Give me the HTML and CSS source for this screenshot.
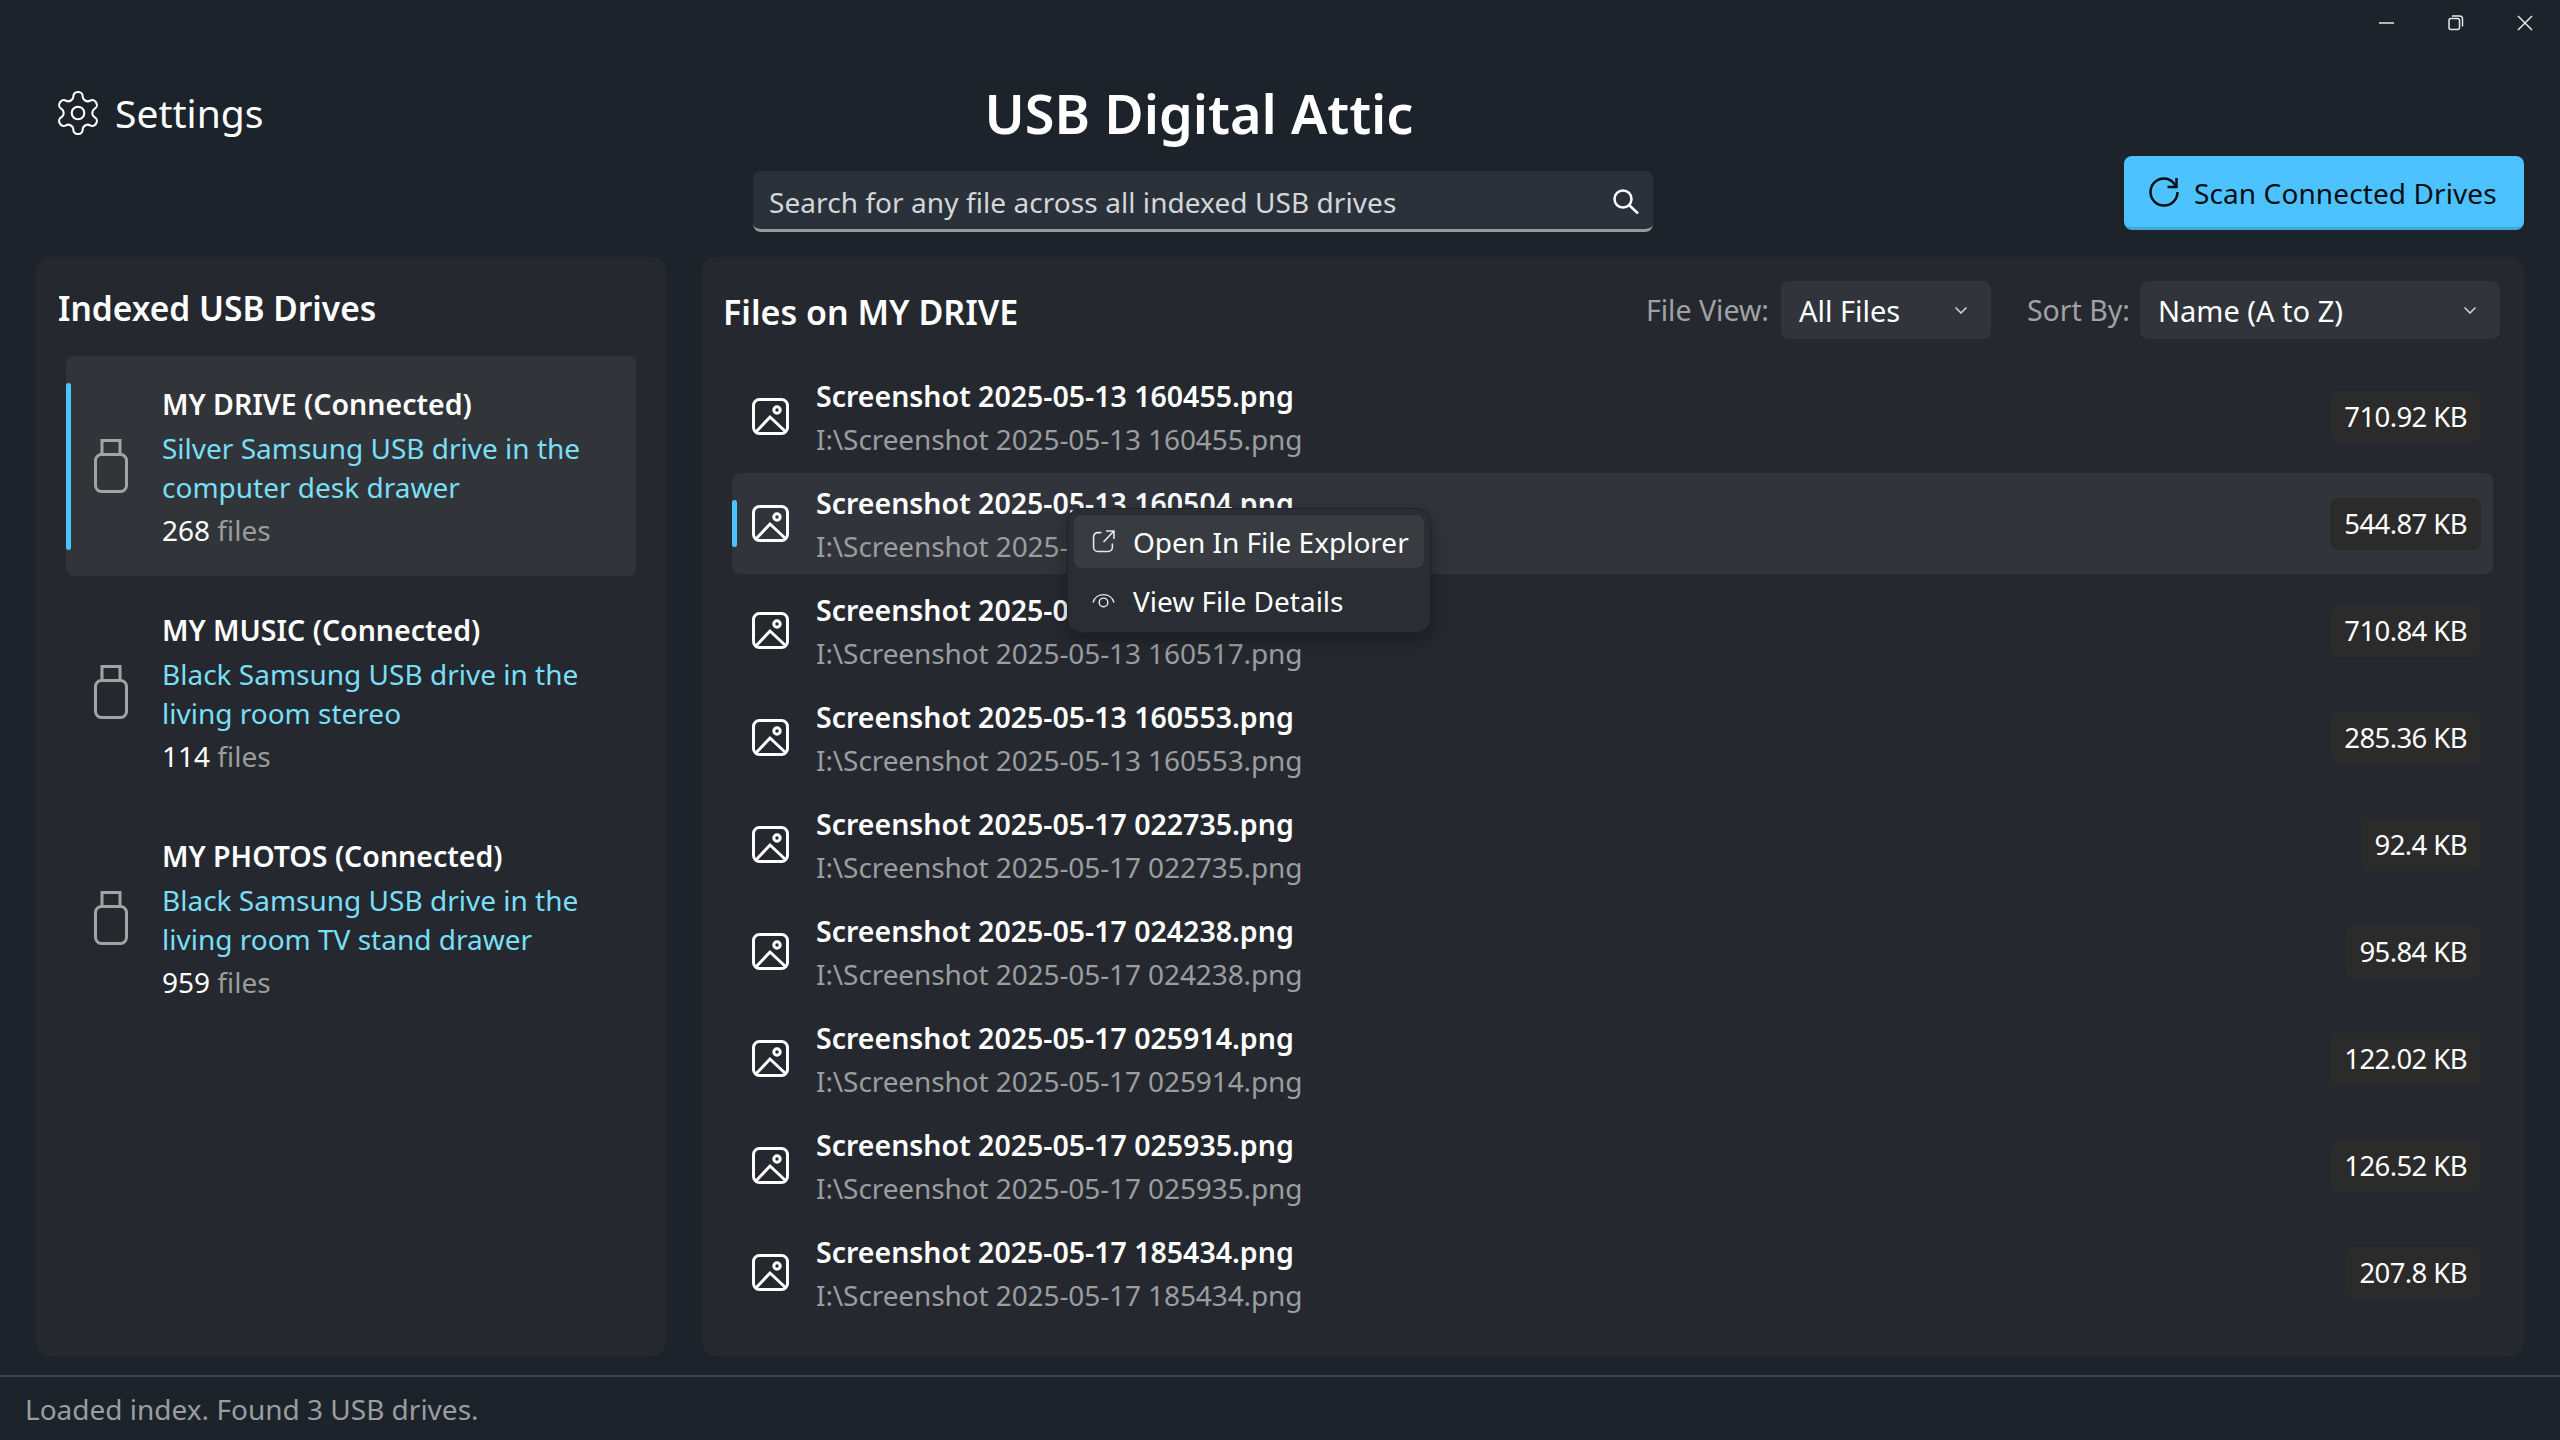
FILE: index.html
```html
<!DOCTYPE html>
<html lang="en">
<head>
  <meta charset="UTF-8" />
  <meta name="viewport" content="width=device-width, initial-scale=1.0" />
  <title>USB Digital Attic</title>
  <link rel="stylesheet" href="styles.css">
</head>
<body>
  <div class="app">
    <div class="titlebar">
      <svg class="win-icon" viewBox="0 0 16 16"><path d="M0 8h15"/></svg>
      <svg class="win-icon" viewBox="0 0 16 16"><rect x="1" y="3.500" width="10.500" height="11" rx="2"/><path d="M4 1h7.500A3 3 0 0 1 14.500 4v7.500"/></svg>
      <svg class="win-icon" viewBox="0 0 16 16"><path d="M1 1l14 14M15 1L1 15"/></svg>
    </div>

    <header class="header">
      <div class="settings">
        <svg class="gear" viewBox="2.500 1.500 19 21"><path d="M12.220 2h-.44a2 2 0 0 0-2 2v.18a2 2 0 0 1-1 1.730l-.43.25a2 2 0 0 1-2 0l-.15-.08a2 2 0 0 0-2.730.73l-.22.38a2 2 0 0 0 .73 2.730l.15.1a2 2 0 0 1 1 1.720v.51a2 2 0 0 1-1 1.740l-.15.09a2 2 0 0 0-.73 2.730l.22.38a2 2 0 0 0 2.730.73l.15-.08a2 2 0 0 1 2 0l.43.25a2 2 0 0 1 1 1.730V20a2 2 0 0 0 2 2h.44a2 2 0 0 0 2-2v-.18a2 2 0 0 1 1-1.730l.43-.25a2 2 0 0 1 2 0l.15.08a2 2 0 0 0 2.730-.73l.22-.39a2 2 0 0 0-.73-2.730l-.15-.08a2 2 0 0 1-1-1.740v-.5a2 2 0 0 1 1-1.740l.15-.09a2 2 0 0 0 .73-2.730l-.22-.38a2 2 0 0 0-2.730-.73l-.15.08a2 2 0 0 1-2 0l-.43-.25a2 2 0 0 1-1-1.730V4a2 2 0 0 0-2-2z"/><circle cx="12" cy="12" r="3"/></svg>
        <span>Settings</span>
      </div>
      <div class="center">
        <h1>USB Digital Attic</h1>
        <div class="search">
          <span>Search for any file across all indexed USB drives</span>
          <svg class="search-icon" viewBox="0 0 26 25"><circle cx="10" cy="10" r="8.500"/><path d="M16 16l9 8.500"/></svg>
        </div>
      </div>
      <div class="scan">
        <svg class="scan-icon" viewBox="0 0 30 30"><path d="M15 1.500A13.500 13.500 0 1 0 28.500 15M27.500 1v9h-9"/><path d="M15 1.500c5 0 9.500 3 12.500 8.500"/></svg>
        <span>Scan Connected Drives</span>
      </div>
    </header>

    <main class="main">
      <section class="panel drives">
        <h2>Indexed USB Drives</h2>
        <div class="drive selected">
          <svg class="usb" viewBox="0 0 34 54"><rect x="1.500" y="15.500" width="31" height="37" rx="6"/><path d="M8 15V1.500h18V15"/></svg>
          <div class="drive-text">
            <div class="drive-name">MY DRIVE (Connected)</div>
            <div class="drive-desc">Silver Samsung USB drive in the computer desk drawer</div>
            <div class="drive-count"><b>268</b> files</div>
          </div>
        </div>
        <div class="drive">
          <svg class="usb" viewBox="0 0 34 54"><rect x="1.500" y="15.500" width="31" height="37" rx="6"/><path d="M8 15V1.500h18V15"/></svg>
          <div class="drive-text">
            <div class="drive-name">MY MUSIC (Connected)</div>
            <div class="drive-desc">Black Samsung USB drive in the living room stereo</div>
            <div class="drive-count"><b>114</b> files</div>
          </div>
        </div>
        <div class="drive">
          <svg class="usb" viewBox="0 0 34 54"><rect x="1.500" y="15.500" width="31" height="37" rx="6"/><path d="M8 15V1.500h18V15"/></svg>
          <div class="drive-text">
            <div class="drive-name">MY PHOTOS (Connected)</div>
            <div class="drive-desc">Black Samsung USB drive in the living room TV stand drawer</div>
            <div class="drive-count"><b>959</b> files</div>
          </div>
        </div>
      </section>

      <section class="panel files">
        <div class="files-head">
          <h2>Files on MY DRIVE</h2>
          <div class="filters">
            <label>File View:</label>
            <div class="select view-select"><span>All Files</span><svg class="chev" viewBox="0 0 12 7"><path d="M.5 .5L6 6l5.500-5.500"/></svg></div>
            <label class="sort-label">Sort By:</label>
            <div class="select sort-select"><span>Name (A to Z)</span><svg class="chev" viewBox="0 0 12 7"><path d="M.5 .5L6 6l5.500-5.500"/></svg></div>
          </div>
        </div>

        <div class="file-list">
          <div class="file">
            <svg class="img" viewBox="0 0 37 37"><rect x="1.500" y="1.500" width="34" height="34" rx="6"/><circle cx="25" cy="12" r="3.200"/><path d="M3 35L18 19l16 15"/></svg>
            <div class="file-text"><div class="file-name">Screenshot 2025-05-13 160455.png</div><div class="file-path">I:\Screenshot 2025-05-13 160455.png</div></div>
            <div class="size">710.92 KB</div>
          </div>
          <div class="file selected">
            <svg class="img" viewBox="0 0 37 37"><rect x="1.500" y="1.500" width="34" height="34" rx="6"/><circle cx="25" cy="12" r="3.200"/><path d="M3 35L18 19l16 15"/></svg>
            <div class="file-text"><div class="file-name">Screenshot 2025-05-13 160504.png</div><div class="file-path">I:\Screenshot 2025-05-13 160504.png</div></div>
            <div class="size">544.87 KB</div>
            <div class="menu">
              <div class="menu-item hover">
                <svg class="menu-icon" viewBox="0 0 22 22"><path d="M9 2.500H5.500a4 4 0 0 0-4 4v10a4 4 0 0 0 4 4h10a4 4 0 0 0 4-4V13M11 11.500L20.500 1.500M13.500 1h7.500v7.500"/></svg>
                <span>Open In File Explorer</span>
              </div>
              <div class="menu-item">
                <svg class="menu-icon" viewBox="0 0 24 16"><path d="M1 10a11.500 11.500 0 0 1 22 0"/><circle cx="12" cy="10" r="4.500"/></svg>
                <span>View File Details</span>
              </div>
            </div>
          </div>
          <div class="file">
            <svg class="img" viewBox="0 0 37 37"><rect x="1.500" y="1.500" width="34" height="34" rx="6"/><circle cx="25" cy="12" r="3.200"/><path d="M3 35L18 19l16 15"/></svg>
            <div class="file-text"><div class="file-name">Screenshot 2025-05-13 160517.png</div><div class="file-path">I:\Screenshot 2025-05-13 160517.png</div></div>
            <div class="size">710.84 KB</div>
          </div>
          <div class="file">
            <svg class="img" viewBox="0 0 37 37"><rect x="1.500" y="1.500" width="34" height="34" rx="6"/><circle cx="25" cy="12" r="3.200"/><path d="M3 35L18 19l16 15"/></svg>
            <div class="file-text"><div class="file-name">Screenshot 2025-05-13 160553.png</div><div class="file-path">I:\Screenshot 2025-05-13 160553.png</div></div>
            <div class="size">285.36 KB</div>
          </div>
          <div class="file">
            <svg class="img" viewBox="0 0 37 37"><rect x="1.500" y="1.500" width="34" height="34" rx="6"/><circle cx="25" cy="12" r="3.200"/><path d="M3 35L18 19l16 15"/></svg>
            <div class="file-text"><div class="file-name">Screenshot 2025-05-17 022735.png</div><div class="file-path">I:\Screenshot 2025-05-17 022735.png</div></div>
            <div class="size">92.4 KB</div>
          </div>
          <div class="file">
            <svg class="img" viewBox="0 0 37 37"><rect x="1.500" y="1.500" width="34" height="34" rx="6"/><circle cx="25" cy="12" r="3.200"/><path d="M3 35L18 19l16 15"/></svg>
            <div class="file-text"><div class="file-name">Screenshot 2025-05-17 024238.png</div><div class="file-path">I:\Screenshot 2025-05-17 024238.png</div></div>
            <div class="size">95.84 KB</div>
          </div>
          <div class="file">
            <svg class="img" viewBox="0 0 37 37"><rect x="1.500" y="1.500" width="34" height="34" rx="6"/><circle cx="25" cy="12" r="3.200"/><path d="M3 35L18 19l16 15"/></svg>
            <div class="file-text"><div class="file-name">Screenshot 2025-05-17 025914.png</div><div class="file-path">I:\Screenshot 2025-05-17 025914.png</div></div>
            <div class="size">122.02 KB</div>
          </div>
          <div class="file">
            <svg class="img" viewBox="0 0 37 37"><rect x="1.500" y="1.500" width="34" height="34" rx="6"/><circle cx="25" cy="12" r="3.200"/><path d="M3 35L18 19l16 15"/></svg>
            <div class="file-text"><div class="file-name">Screenshot 2025-05-17 025935.png</div><div class="file-path">I:\Screenshot 2025-05-17 025935.png</div></div>
            <div class="size">126.52 KB</div>
          </div>
          <div class="file">
            <svg class="img" viewBox="0 0 37 37"><rect x="1.500" y="1.500" width="34" height="34" rx="6"/><circle cx="25" cy="12" r="3.200"/><path d="M3 35L18 19l16 15"/></svg>
            <div class="file-text"><div class="file-name">Screenshot 2025-05-17 185434.png</div><div class="file-path">I:\Screenshot 2025-05-17 185434.png</div></div>
            <div class="size">207.8 KB</div>
          </div>
        </div>
      </section>
    </main>

    <footer class="status">Loaded index. Found 3 USB drives.</footer>
  </div>
</body>
</html>
```
FILE: styles.css
```css
* { box-sizing: border-box; }
html, body { margin: 0; height: 100%; }
body {
  font-family: "Noto Sans", "Open Sans", sans-serif;
  background-color: #1c232b;
  color: #fff;
  font-size: 28px;
}
svg { fill: none; stroke: currentColor; display: block; }
h1, h2 { margin: 0; }

.app {
  width: 2560px;
  height: 1440px;
  display: flex;
  flex-direction: column;
  overflow: hidden;
}

/* title bar */
.titlebar {
  height: 46px;
  flex: none;
  display: flex;
  justify-content: flex-end;
  align-items: center;
  gap: 53px;
  padding-right: 27px;
}
.win-icon { width: 16px; height: 16px; stroke-width: 1.5; color: #e6e8ea; }

/* header */
.header {
  height: 211px;
  flex: none;
  display: grid;
  grid-template-columns: 753px 900px 1fr;
}
.settings {
  display: flex;
  align-items: center;
  gap: 16px;
  padding: 43px 0 0 57px;
  height: 90px;
  font-size: 39px;
}
.gear { width: 42px; height: 44px; stroke-width: 1; margin-top: 1px; }
.center { display: flex; flex-direction: column; align-items: center; }
h1 { font-size: 54px; font-weight: 600; line-height: 68px; margin-top: 33px; margin-left: -8px; }
.search {
  width: 900px;
  height: 61px;
  margin-top: 24px;
  padding: 4px 14px 0 16px;
  background: #2b313a;
  border-bottom: 3px solid #9a9a9a;
  border-radius: 8px;
  display: flex;
  align-items: center;
  justify-content: space-between;
  color: #d4d6d8;
  letter-spacing: 0.07px;
}
.search-icon { width: 26px; height: 25px; stroke-width: 2.500; color: #fff; margin-top: -2px; }
.scan {
  justify-self: end;
  margin: 110px 36px 0 0;
  width: 400px;
  height: 74px;
  background: #4cc2ff;
  border-bottom: 3px solid #42a9de;
  border-radius: 8px;
  color: #0a0e12;
  display: flex;
  align-items: center;
  gap: 15px;
  padding: 2px 0 0 25px;
  white-space: nowrap;
}
.scan-icon { width: 30px; height: 30px; stroke-width: 2.500; margin-top: -2px; }
.scan span { letter-spacing: 0.1px; }

/* panels */
.main {
  height: 1099px;
  flex: none;
  display: grid;
  grid-template-columns: 630px 1fr;
  gap: 36px;
  padding: 0 36px;
}
.panel { background: #25292f; border-radius: 14px; }
.panel h2 { font-size: 34px; font-weight: 600; }

.drives { padding: 28px 30px 0; }
.drives h2 { font-size: 33.500px; margin-left: -8px; line-height: 46px; margin-bottom: 25px; }
.drive {
  height: 220px;
  margin-bottom: 6px;
  border-radius: 8px;
  display: flex;
  align-items: center;
  gap: 34px;
  padding-left: 28px;
  position: relative;
}
.drive.selected { background: #31353a; }
.drive.selected::before {
  content: "";
  position: absolute;
  left: 0;
  top: 27px;
  bottom: 26px;
  width: 5px;
  border-radius: 3px;
  background: #4cc2ff;
}
.usb { width: 34px; height: 54px; stroke-width: 3; color: #a3a3a3; flex: none; }
.drive-text { width: 450px; padding-top: 3px; }
.drive-name { font-size: 28.500px; font-weight: 600; line-height: 39px; margin-bottom: 5px; }
.drive-desc { color: #79dff7; line-height: 39px; }
.drive-count { color: #9b9b9b; line-height: 42px; margin-top: 2px; }
.drive-count b { color: #fff; font-weight: 400; }

.files-head {
  display: flex;
  justify-content: space-between;
  align-items: center;
  height: 58px;
  margin-top: 24px;
  padding: 0 24px 0 21px;
}
.files-head h2 { padding-top: 3px; }
.filters { display: flex; align-items: center; color: #a0a2a5; font-size: 28.500px; }
.filters label { margin-right: 12px; }
.filters .sort-label { margin-left: 36px; margin-right: 10px; }
.select {
  height: 58px;
  font-size: 29px;
  background: #31353b;
  border-radius: 8px;
  display: flex;
  align-items: center;
  justify-content: space-between;
  padding: 0 24px 0 18px;
  color: #fff;
}
.view-select { width: 210px; }
.sort-select { width: 360px; }
.chev { width: 12px; height: 7px; stroke-width: 1.500; color: #d4d6d8; }

.file-list {
  display: flex;
  flex-direction: column;
  gap: 6px;
  margin: 27px 31px 0 30px;
}
.file {
  height: 101px;
  display: flex;
  align-items: center;
  padding: 0 12px 0 20px;
  border-radius: 8px;
  position: relative;
}
.file.selected { background: #31353b; }
.file.selected::before {
  content: "";
  position: absolute;
  left: 0;
  top: 27px;
  bottom: 27px;
  width: 5px;
  border-radius: 3px;
  background: #4cc2ff;
}
.img { width: 37px; height: 37px; stroke-width: 3; flex: none; margin-right: 27px; }
.file-text { flex: 1; padding-top: 2px; }
.file-name { font-size: 28.500px; font-weight: 600; line-height: 42px; }
.file-path { color: #9b9d9f; line-height: 42px; padding-top: 1px; letter-spacing: -0.1px; }
.size {
  height: 52px;
  padding: 0 14px;
  font-size: 27.500px;
  letter-spacing: -0.6px;
  background: #2b2b2c;
  border-radius: 8px;
  display: flex;
  align-items: center;
}

/* context menu */
.menu {
  position: absolute;
  left: 335px;
  top: 35px;
  width: 364px;
  height: 125px;
  padding: 6px;
  background: #2a2d33;
  border: 1px solid #1f2227;
  border-radius: 14px;
  box-shadow: 0 6px 18px rgba(0,0,0,0.35);
  z-index: 2;
}
.menu-item {
  height: 53px;
  margin-bottom: 6px;
  border-radius: 8px;
  display: flex;
  align-items: center;
  padding-left: 18px;
}
.menu-item.hover { background: #383b40; }
.menu-icon { width: 23px; height: 23px; stroke-width: 1.500; margin-right: 18px; color: #e6e8ea; flex: none; }

/* status bar */
.status {
  margin-top: 19px;
  flex: 1;
  border-top: 2px solid #3d4248;
  display: flex;
  align-items: center;
  padding-left: 25px;
  color: #9b9d9f;
}
```
